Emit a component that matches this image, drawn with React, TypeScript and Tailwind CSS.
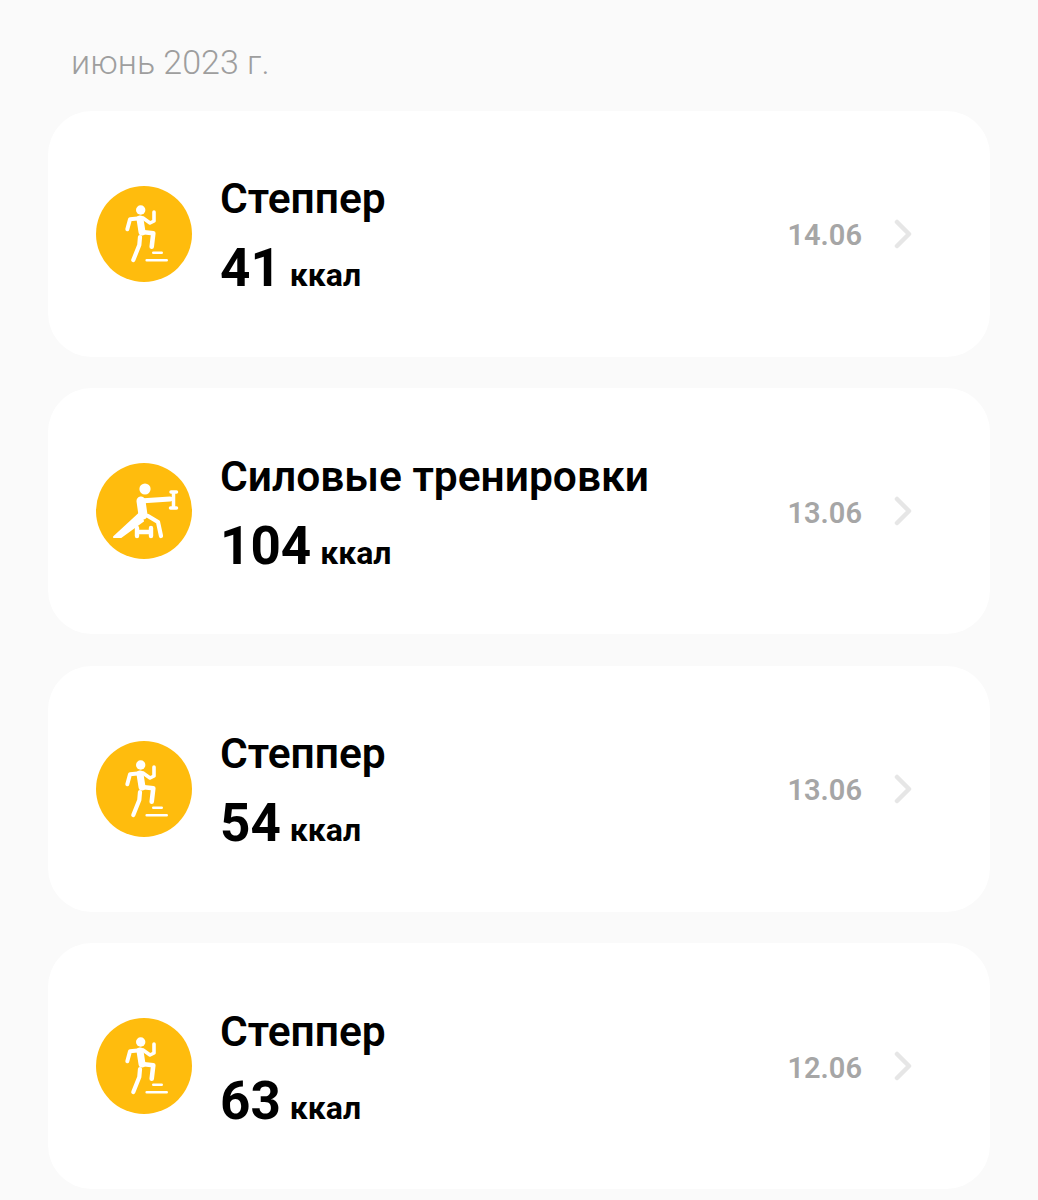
type Workout = {
  name: string;
  kcal: number;
  date: string;
  icon: 'stepper' | 'strength';
};

const workouts: Workout[] = [
  { name: 'Степпер', kcal: 41, date: '14.06', icon: 'stepper' },
  { name: 'Силовые тренировки', kcal: 104, date: '13.06', icon: 'strength' },
  { name: 'Степпер', kcal: 54, date: '13.06', icon: 'stepper' },
  { name: 'Степпер', kcal: 63, date: '12.06', icon: 'stepper' },
];

function StepperIcon() {
  return (
    <svg viewBox="0 0 96 96" className="h-24 w-24" fill="none" stroke="#fff" strokeLinecap="round" strokeLinejoin="round">
      <circle cx="44.7" cy="24" r="4.7" fill="#fff" stroke="none" />
      <path d="M31.3 43.3 34 33.3 44 32.3" strokeWidth="4" />
      <path d="M44 33 46 46" strokeWidth="7" />
      <path d="M47 32 54 37 58 35V26" strokeWidth="3.6" />
      <path d="M46 46 57.3 47.3 55.7 60.7" strokeWidth="4.6" />
      <path d="M44 51 43.3 59 37.3 74" strokeWidth="4.2" />
      <path d="M57.3 66.7H65.7M50.7 74.3H70.7" strokeWidth="2.6" />
    </svg>
  );
}

function StrengthIcon() {
  return (
    <svg viewBox="0 0 96 96" className="h-24 w-24" fill="none" stroke="#fff" strokeLinecap="round" strokeLinejoin="round">
      <circle cx="49" cy="26" r="5.6" fill="#fff" stroke="none" />
      <path d="M44 38 74 36" strokeWidth="5" />
      <path d="M77.5 30V44" strokeWidth="3.5" />
      <path d="M75 29H80.5M74.5 45H80.5" strokeWidth="3.5" />
      <path d="M45 38 47 52" strokeWidth="9" />
      <path d="M44 50 18 74 25 74 47 58Z" fill="#fff" strokeWidth="2" />
      <path d="M52 53 62 59 65 73" strokeWidth="4.2" />
      <path d="M41 65V73M55 65V73M41 69H55" strokeWidth="4.4" />
    </svg>
  );
}

function WorkoutCard({ workout }: { workout: Workout }) {
  return (
    <div className="flex h-[246px] w-[942px] items-center rounded-[44px] bg-white pl-12 pr-[76px]">
      <div className="h-24 w-24 shrink-0 rounded-full bg-[#ffbc0d]">
        {workout.icon === 'stepper' ? <StepperIcon /> : <StrengthIcon />}
      </div>
      <div className="ml-[28px] flex flex-col pt-[13px] text-black">
        <div className="text-[42.5px] leading-[48px] font-semibold">{workout.name}</div>
        <div className="mt-[15px] flex items-baseline leading-[60px]">
          <span className="text-[53px] font-bold">{workout.kcal}</span>
          <span className="ml-[9px] text-[32px] font-bold">ккал</span>
        </div>
      </div>
      <div className="ml-auto flex items-center pt-[5px]">
        <span className="text-[29px] font-semibold text-[#a6a6a6]">{workout.date}</span>
        <svg viewBox="0 0 24 40" className="ml-[30px] -mt-[5px] h-[30px] w-[22px]" fill="none" stroke="#e6e6e6" strokeWidth="6" strokeLinecap="round" strokeLinejoin="round">
          <path d="M4 4 20 20 4 36" />
        </svg>
      </div>
    </div>
  );
}

export default function App() {
  return (
    <div className="h-[1200px] overflow-hidden bg-[#fafafa] pl-12 font-['Roboto',sans-serif]">
      <div className="pt-[40px] pl-[23px] text-[34px] leading-[44px] font-light text-[#9e9e9e]">
        июнь 2023 г.
      </div>
      <div className="mt-[26.6px] flex flex-col gap-[31.5px]">
        {workouts.map((w, i) => (
          <WorkoutCard key={i} workout={w} />
        ))}
      </div>
    </div>
  );
}
